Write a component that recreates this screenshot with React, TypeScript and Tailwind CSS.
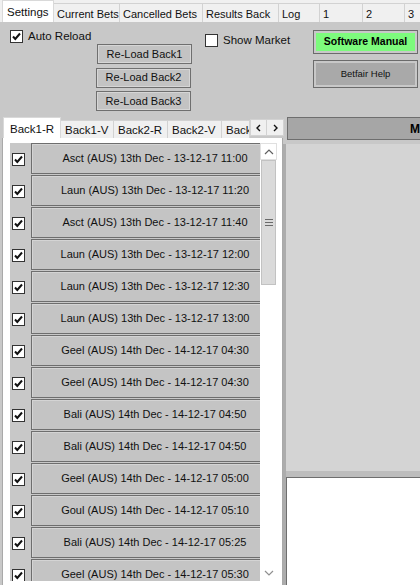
import React from "react";

const rows = [
  "Asct (AUS) 13th Dec - 13-12-17 11:00",
  "Laun (AUS) 13th Dec - 13-12-17 11:20",
  "Asct (AUS) 13th Dec - 13-12-17 11:40",
  "Laun (AUS) 13th Dec - 13-12-17 12:00",
  "Laun (AUS) 13th Dec - 13-12-17 12:30",
  "Laun (AUS) 13th Dec - 13-12-17 13:00",
  "Geel (AUS) 14th Dec - 14-12-17 04:30",
  "Geel (AUS) 14th Dec - 14-12-17 04:30",
  "Bali (AUS) 14th Dec - 14-12-17 04:50",
  "Bali (AUS) 14th Dec - 14-12-17 04:50",
  "Geel (AUS) 14th Dec - 14-12-17 05:00",
  "Goul (AUS) 14th Dec - 14-12-17 05:10",
  "Bali (AUS) 14th Dec - 14-12-17 05:25",
  "Geel (AUS) 14th Dec - 14-12-17 05:30",
];

function CheckBox({ checked }: { checked: boolean }) {
  return (
    <div className="w-[13px] h-[13px] bg-white border border-[#333333] flex items-center justify-center shrink-0">
      {checked && (
        <svg width="11" height="11" viewBox="0 0 11 11">
          <path d="M2 5.5 L4.3 8 L9 2.5" fill="none" stroke="#111" strokeWidth="2" />
        </svg>
      )}
    </div>
  );
}

function ReloadBtn({ label, ml }: { label: string; ml: string }) {
  return (
    <div
      className={`h-[20px] w-[95px] border border-[#6f6f6f] bg-[#c3c3c3] shadow-[inset_0_0_0_1px_#d6d6d6] flex items-center justify-center text-[11px] text-[#111] whitespace-nowrap ${ml}`}
    >
      {label}
    </div>
  );
}

export default function App() {
  const topTabs: [string, number][] = [
    ["Current Bets", 66],
    ["Cancelled Bets", 83],
    ["Results Back", 76],
    ["Log", 41],
    ["1", 43],
    ["2", 42],
    ["3", 42],
  ];
  const subTabs: [string, number][] = [
    ["Back1-V", 53],
    ["Back2-R", 54],
    ["Back2-V", 54],
    ["Back", 28],
  ];
  return (
    <div
      className="w-[420px] h-[585px] overflow-hidden bg-[#c8c8c8] flex flex-col text-[#111]"
      style={{ fontFamily: '"Liberation Sans", Arial, sans-serif' }}
    >
      {/* top tab strip */}
      <div className="h-[22px] shrink-0 flex items-end bg-[#f0f0f0] pl-[2px] overflow-hidden">
        <div className="h-[22px] w-[52px] shrink-0 bg-white border border-b-0 border-[#d9d9d9] pl-[4px] pt-[3px] text-[11.5px] whitespace-nowrap">
          Settings
        </div>
        {topTabs.map(([t, w]) => (
          <div
            key={t}
            style={{ width: w }}
            className="h-[19px] shrink-0 bg-[#f0f0f0] border border-l-0 border-b-0 border-[#d2d2d2] pl-[3px] pt-[2px] text-[11px] whitespace-nowrap overflow-hidden"
          >
            {t}
          </div>
        ))}
      </div>

      {/* settings panel */}
      <div className="h-[95px] shrink-0 flex">
        <div className="w-[96px] shrink-0 pl-[10px] pt-[6px]">
          <div className="flex items-center gap-[5px]">
            <CheckBox checked />
            <span className="text-[11.5px] whitespace-nowrap">Auto Reload</span>
          </div>
        </div>
        <div className="w-[98px] shrink-0 pt-[22px] flex flex-col gap-[3.5px]">
          <ReloadBtn label="Re-Load Back1" ml="ml-[1px]" />
          <ReloadBtn label="Re-Load Back2" ml="ml-0" />
          <ReloadBtn label="Re-Load Back3" ml="ml-0" />
        </div>
        <div className="w-[119px] shrink-0 pl-[11px] pt-[10px]">
          <div className="flex items-center gap-[5px]">
            <CheckBox checked={false} />
            <span className="text-[11.5px] whitespace-nowrap">Show Market</span>
          </div>
        </div>
        <div className="flex-1 pt-[8px] pr-[2px] flex flex-col gap-[6px]">
          <div className="h-[24px] border border-[#6b6b6b] p-[2px]">
            <div className="h-full bg-[#7dfb7d] flex items-center justify-center text-[10.5px] font-bold text-black whitespace-nowrap">
              Software Manual
            </div>
          </div>
          <div className="h-[28px] border border-[#6b6b6b] p-[2px]">
            <div className="h-full bg-[#a9a9a9] flex items-center justify-center text-[9.5px] text-[#111] whitespace-nowrap">
              Betfair Help
            </div>
          </div>
        </div>
      </div>

      {/* lower section */}
      <div className="flex-1 flex min-h-0">
        {/* left */}
        <div className="w-[283px] shrink-0 flex flex-col">
          <div className="h-[21px] shrink-0 flex items-end pl-[3px]">
            <div className="h-[21px] w-[58px] shrink-0 bg-white border border-b-0 border-[#d9d9d9] pl-[6px] pt-[3px] text-[11.5px] whitespace-nowrap">
              Back1-R
            </div>
            {subTabs.map(([t, w]) => (
              <div
                key={t}
                style={{ width: w }}
                className="h-[18px] shrink-0 bg-[#f0f0f0] border border-l-0 border-b-0 border-[#d2d2d2] pl-[4px] pt-[1px] text-[11.5px] overflow-hidden whitespace-nowrap"
              >
                {t}
              </div>
            ))}
            <div className="h-[17px] w-[17px] shrink-0 mb-[2px] bg-[#f0f0f0] border border-[#d2d2d2] flex items-center justify-center">
              <svg width="8" height="8" viewBox="0 0 8 8">
                <path d="M5 1 L2 4 L5 7" fill="none" stroke="#111" strokeWidth="1.4" />
              </svg>
            </div>
            <div className="h-[17px] w-[17px] shrink-0 mb-[2px] bg-[#f0f0f0] border border-l-0 border-[#d2d2d2] flex items-center justify-center">
              <svg width="8" height="8" viewBox="0 0 8 8">
                <path d="M3 1 L6 4 L3 7" fill="none" stroke="#111" strokeWidth="1.4" />
              </svg>
            </div>
          </div>
          <div className="flex-1 min-h-0 ml-[2px] bg-white border-l border-r border-[#a9a9a9] flex pt-[5px] pl-[7px] pb-[4px]">
            <div className="w-[250px] shrink-0 overflow-hidden bg-[#c8c8c8] flex flex-col">
              {rows.map((r, i) => (
                <div key={i} className="h-[32px] shrink-0 flex items-start">
                  <div className="w-[21px] shrink-0 pl-[2px] pt-[10px]">
                    <CheckBox checked />
                  </div>
                  <div className="w-[247px] shrink-0 h-[31px] border-t border-l border-b border-[#6e6e6e] bg-[#c4c4c4] shadow-[inset_1px_1px_0_#d4d4d4] flex items-center justify-center text-[11px] whitespace-nowrap">
                    {r}
                  </div>
                </div>
              ))}
            </div>
            <div className="w-[17px] shrink-0 flex flex-col bg-white">
              <div className="h-[17px] shrink-0 border border-[#e0e0e0] flex items-center justify-center">
                <svg width="10" height="6" viewBox="0 0 10 6">
                  <path d="M1 5 L5 1 L9 5" fill="none" stroke="#606060" strokeWidth="1.2" />
                </svg>
              </div>
              <div className="h-[125px] shrink-0 mx-[1px] bg-[#dadada] border border-[#c2c2c2] flex items-center justify-center">
                <svg width="8" height="7" viewBox="0 0 8 7">
                  <path d="M0 0.5 H8 M0 3.5 H8 M0 6.5 H8" stroke="#6a6a6a" strokeWidth="1" />
                </svg>
              </div>
              <div className="flex-1" />
              <div className="h-[17px] shrink-0 flex items-center justify-center">
                <svg width="10" height="6" viewBox="0 0 10 6">
                  <path d="M1 1 L5 5 L9 1" fill="none" stroke="#909090" strokeWidth="1.2" />
                </svg>
              </div>
            </div>
          </div>
        </div>

        {/* right */}
        <div className="flex-1 flex flex-col min-w-0">
          <div className="h-[23px] shrink-0 ml-[4px] border border-r-0 border-[#6e6e6e] bg-[#a6a6a6] flex items-center pl-[122px] text-[12px] font-bold text-black whitespace-nowrap overflow-hidden">
            Market
          </div>
          <div className="h-[4px] shrink-0" />
          <div className="flex-1 flex flex-col border-l-[3px] border-[#acacac]">
            <div className="h-[327px] shrink-0 bg-[#d4d4d4]" />
            <div className="h-[6px] shrink-0 bg-[#bdbdbd]" />
            <div className="flex-1 bg-white border-t border-l border-[#6e6e6e]" />
          </div>
        </div>
      </div>
    </div>
  );
}
